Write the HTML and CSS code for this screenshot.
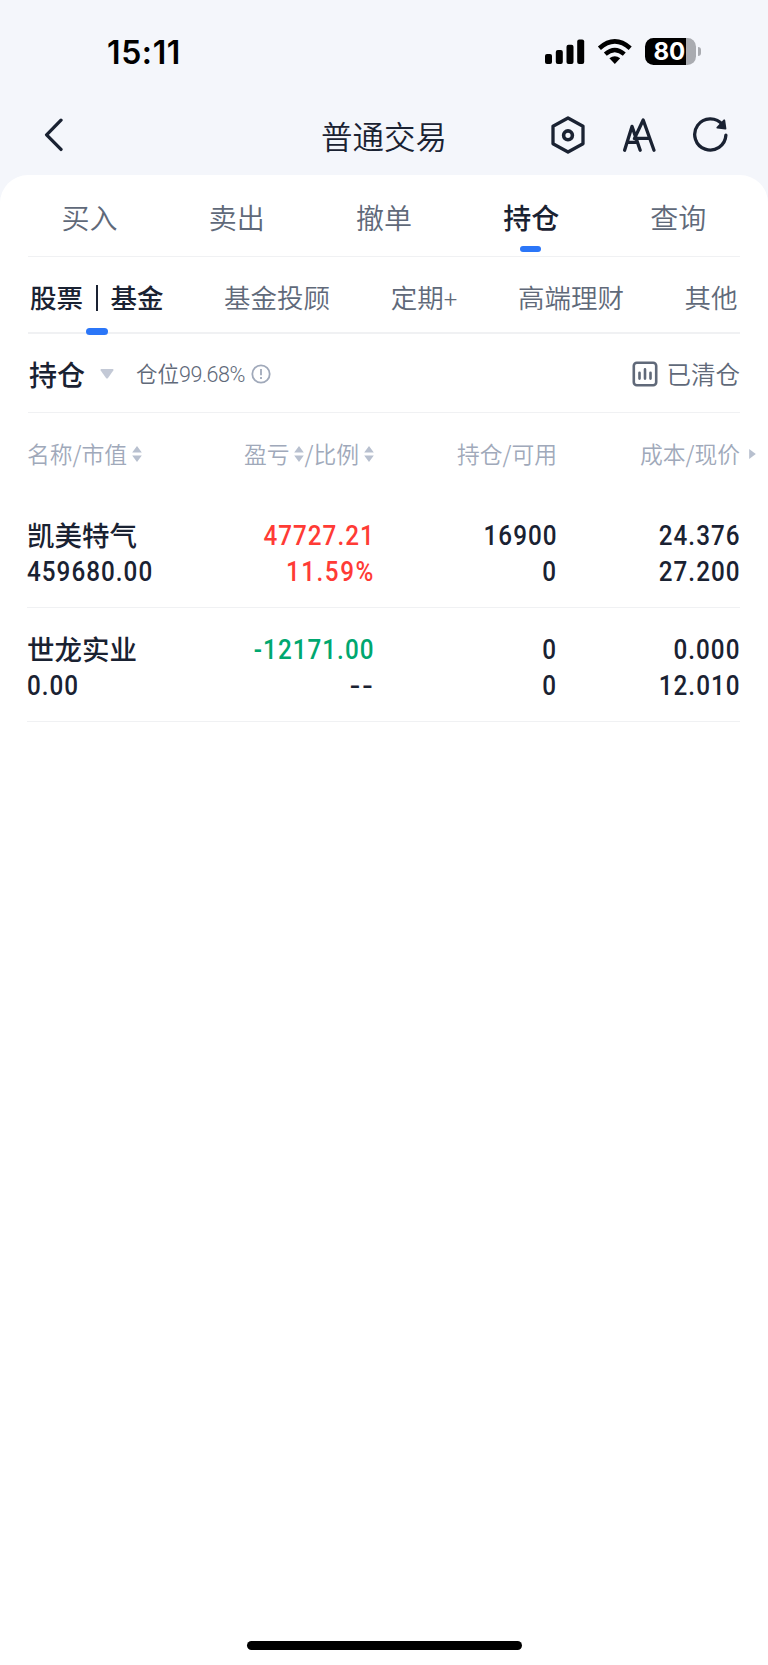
FILE: index.html
```html
<!DOCTYPE html>
<html lang="zh-CN">
<head>
<meta charset="utf-8">
<title>普通交易</title>
<link rel="stylesheet" href="styles.css">
</head>
<body>
<div class="screen">
  <div class="status">
    <span class="time">15:11</span>
    <div class="status-icons">
      <svg class="signal" width="40" height="26" viewBox="0 0 40 26"><rect x="0" y="15" width="7" height="10" rx="2"/><rect x="10.8" y="11" width="7" height="14" rx="2"/><rect x="21.5" y="5.8" width="7" height="19.2" rx="2"/><rect x="32.2" y="0.4" width="7" height="24.6" rx="2"/></svg>
      <svg class="wifi" width="36" height="26" viewBox="0 0 36 26"><path d="M2.4 9.2Q17.8-4.3 33.2 9.2" fill="none" stroke="#000" stroke-width="4.6"/><path d="M8.3 15.2Q17.8 6.9 27.3 15.2" fill="none" stroke="#000" stroke-width="4.4"/><path d="M12.4 19.3Q17.8 15 23.2 19.3L17.8 25Z"/></svg>
      <div class="battery"><span class="level">80</span></div>
      <i class="battery-cap"></i>
    </div>
  </div>
  <header class="nav">
    <svg class="back" width="20" height="34" viewBox="0 0 20 34"><path d="M17 2.2L2.6 16.8L17 31.4"/></svg>
    <h1 class="title">普通交易</h1>
    <div class="actions">
      <svg width="36" height="38" viewBox="0 0 36 38"><path d="M18 2L33 10.2V27.8L18 36L3 27.8V10.2Z"/><circle cx="18" cy="19.3" r="4.4" stroke-width="3.6"/></svg>
      <svg width="36" height="38" viewBox="0 0 36 38"><path d="M3.6 34.2L11 10.4L19.2 34.2M6 26.4H15.8M13.4 22.6L22.2 4L33 34.2M16.4 22.4H28.6"/></svg>
      <svg width="36" height="38" viewBox="0 0 36 38"><path d="M30.6 8.8A15.6 15.6 0 1 0 33.9 19.2"/><path class="solid" d="M32.2 4.4L33.4 12.6L25.4 11.6Z"/></svg>
    </div>
  </header>
  <main class="panel">
    <nav class="tabs">
      <a>买入</a><a>卖出</a><a>撤单</a><a class="active">持仓</a><a>查询</a>
    </nav>
    <nav class="subtabs">
      <a class="active">股票<i class="bar"></i>基金</a><a>基金投顾</a><a>定期<span class="plus">+</span></a><a>高端理财</a><a>其他</a>
    </nav>
    <section class="summary">
      <strong class="holding">持仓</strong>
      <svg class="drop" width="14" height="10" viewBox="0 0 14 10"><path d="M1 0H13Q14 .5 13.3 1.6L8 9Q7 10 6 9L.7 1.6Q0 .5 1 0Z"/></svg>
      <span class="ratio">仓位<span class="num">99.68%</span></span>
      <svg class="info" width="20" height="20" viewBox="0 0 20 20"><circle cx="10" cy="10" r="8.7"/><path d="M10 5V11.2M10 13V15"/></svg>
      <div class="cleared">
        <svg width="26" height="26" viewBox="0 0 26 26"><rect x="1.8" y="1.8" width="22.4" height="22.4" rx="3"/><path d="M7.5 11.8V17.6M13 8.4V17.6M18.5 11.8V17.6"/></svg>
        <span>已清仓</span>
      </div>
    </section>
    <section class="table">
      <div class="row head">
        <div class="cell">名称/市值<svg class="sort" width="10" height="16" viewBox="0 0 10 16"><path d="M5 0L9.8 6.6H.2ZM5 16L9.8 9.4H.2Z"/></svg></div>
        <div class="cell">盈亏<svg class="sort" width="10" height="16" viewBox="0 0 10 16"><path d="M5 0L9.8 6.6H.2ZM5 16L9.8 9.4H.2Z"/></svg>/比例<svg class="sort" width="10" height="16" viewBox="0 0 10 16"><path d="M5 0L9.8 6.6H.2ZM5 16L9.8 9.4H.2Z"/></svg></div>
        <div class="cell">持仓/可用</div>
        <div class="cell">成本/现价</div>
        <svg class="more" width="7" height="10" viewBox="0 0 7 10"><path d="M.2 0L6.8 5L.2 10Z"/></svg>
      </div>
      <div class="row item">
        <div class="cell"><span class="name">凯美特气</span><span class="num">459680.00</span></div>
        <div class="cell up"><span class="num">47727.21</span><span class="num percent">11.59%</span></div>
        <div class="cell"><span class="num">16900</span><span class="num">0</span></div>
        <div class="cell"><span class="num">24.376</span><span class="num">27.200</span></div>
      </div>
      <div class="row item">
        <div class="cell"><span class="name">世龙实业</span><span class="num">0.00</span></div>
        <div class="cell down"><span class="num">-12171.00</span><span class="num flat">--</span></div>
        <div class="cell"><span class="num">0</span><span class="num">0</span></div>
        <div class="cell"><span class="num">0.000</span><span class="num">12.010</span></div>
      </div>
    </section>
    <div class="home"></div>
  </main>
</div>
</body>
</html>
```
FILE: styles.css
```css
* { box-sizing: border-box; }
body { margin: 0; background: #f4f6fb; color: #1a2232; font-family: "Noto Sans CJK SC", sans-serif; font-weight: 350; }
.screen { width: 768px; height: 1665px; display: flex; flex-direction: column; }
svg { display: block; flex: none; }
.num { font-family: Roboto, sans-serif; }

.status { height: 100px; padding: 0 67.5px 0 107px; display: flex; justify-content: space-between; }
.time { padding-top: 33px; font: 600 32px/40px Inter, sans-serif; color: #000; letter-spacing: .6px; }
.status-icons { display: flex; align-items: center; height: 27px; margin-top: 38px; }
.signal { margin-right: 12.5px; }
.wifi { margin-right: 11.5px; }
.battery { width: 51px; height: 27px; border-radius: 8.5px; background: linear-gradient(90deg, #000 41px, #a9abb0 41px); padding-left: 9px; }
.level { display: block; color: #fff; font: 650 24px/27px Inter, sans-serif; }
.battery-cap { width: 3px; height: 9px; margin-left: 2px; border-radius: 0 4px 4px 0; background: #a9abb0; }

.nav { height: 75px; padding: 0 40px 0 44px; display: grid; grid-template-columns: 1fr auto 1fr; align-items: center; }
.nav svg { fill: none; stroke: #1a2232; stroke-width: 3.3; stroke-linecap: round; stroke-linejoin: round; }
.nav .solid { fill: #1a2232; stroke-width: 2; }
.back { margin-bottom: 5px; }
.title { margin: 0; font-size: 31.5px; font-weight: 350; line-height: 46px; transform: translate(-2px, -3.5px); }
.actions { display: flex; justify-content: flex-end; gap: 35px; margin-bottom: 5px; }

.panel { flex: 1; background: #fff; border-radius: 28px 28px 0 0; padding: 0 28px; display: flex; flex-direction: column; }
.tabs { height: 82px; display: grid; grid-template-columns: repeat(5, 147.2px); justify-content: center; border-bottom: 1.5px solid #f0f1f3; font-size: 28px; line-height: 40px; color: #606979; text-align: center; }
.tabs a { padding-top: 22px; }
.active { color: #1a2232; font-weight: 500; }
.tabs .active::after { content: ""; display: block; width: 21px; height: 6px; margin: 9px 64px 0 62px; border-radius: 3px; background: #2b76f8; }
.subtabs { height: 77px; padding: 0 2.5px 0 2px; display: flex; justify-content: space-between; border-bottom: 2px solid #f0f1f3; font-size: 26.5px; line-height: 38px; color: #606979; }
.subtabs a { padding-top: 20.5px; white-space: nowrap; }
.subtabs .active::after { content: ""; display: block; width: 22px; height: 7px; margin: 12.5px auto 0; border-radius: 3.5px; background: #2b76f8; position: relative; }
.bar { display: inline-block; width: 2.5px; height: 26px; margin: 0 12.5px; background: currentColor; vertical-align: -3px; }
.plus { font-family: Roboto, sans-serif; font-size: 24px; }

.summary { height: 79px; display: flex; align-items: center; border-bottom: 1.5px solid #f0f1f3; color: #606979; padding-top: 2px; }
.holding { font-size: 28px; font-weight: 500; line-height: 40px; color: #1a2232; margin-left: 1px; }
.drop { margin-left: 15px; fill: #c3c9d6; }
.ratio { margin-left: 22px; font-size: 21.5px; line-height: 30px; white-space: nowrap; }
.ratio .num { letter-spacing: -.5px; }
.info { margin-left: 6px; fill: none; stroke: #a0a9ba; stroke-width: 1.8; }
.cleared { margin-left: auto; display: flex; align-items: center; gap: 9px; font-size: 24.5px; line-height: 34px; }
.cleared svg { fill: none; stroke: #606979; stroke-width: 2.6; stroke-linecap: round; }

.table { margin-left: -1px; }
.row { display: grid; grid-template-columns: 164px 183px 183px 183px; }
.cell { text-align: right; white-space: nowrap; }
.cell:first-child { text-align: left; }
.head { height: 80.5px; padding-top: 1.5px; font-size: 22.8px; line-height: 34px; color: #a0a9ba; grid-template-columns: 164px 183px 183px 183px 7px; align-items: center; }
.head .cell { display: flex; align-items: center; justify-content: flex-end; }
.head .cell:first-child { justify-content: flex-start; }
.sort { margin-left: 5px; fill: #b8c0cf; }
.more { fill: #b8c0cf; margin-left: 9px; }
.item { height: 114px; border-bottom: 1.5px solid #f0f1f3; padding-top: 24.5px; }
.item .cell { display: flex; flex-direction: column; align-items: flex-end; font-size: 27.5px; line-height: 36px; }
.item .cell:first-child { align-items: flex-start; }
.item .num { font-size: 28px; font-weight: 500; letter-spacing: 1.2px; margin-right: -.4px; transform: scaleX(.865); transform-origin: right; }
.item .cell:first-child .num { transform-origin: left; }
.item .percent { letter-spacing: 1.8px; margin-right: -1px; }
.name { font-weight: 500; transform: translateY(-2px); }
.up { color: #ff3b35; }
.down { color: #00a76f; }
.item .flat { color: #1a2232; letter-spacing: 2px; margin-right: -1px; transform: scaleX(1.1); }
.home { width: 275px; height: 9px; margin: auto auto 15px; border-radius: 5px; background: #000; }
```
